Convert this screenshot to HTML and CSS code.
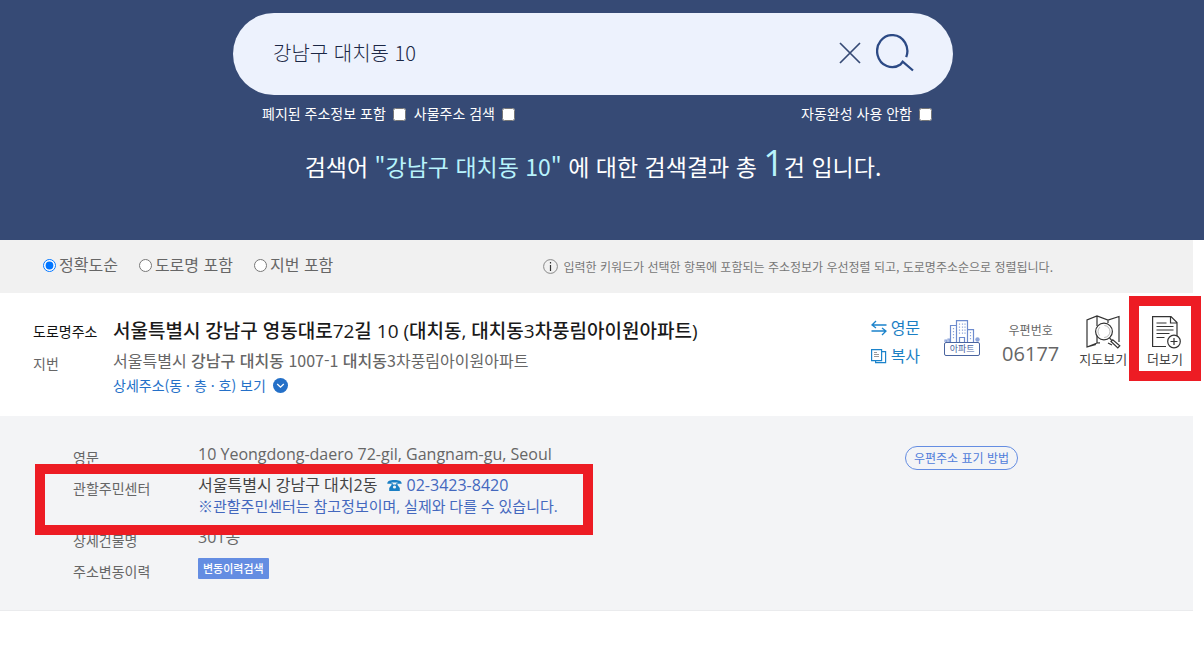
FILE: index.html
```html
<!DOCTYPE html>
<html lang="ko">
<head>
<meta charset="utf-8">
<meta name="viewport" content="width=device-width, initial-scale=1">
<title>주소 검색결과</title>
<link rel="stylesheet" href="styles.css">
</head>
<body>
<header class="hero">
  <form class="search" role="search">
    <input class="search-input" type="text" value="강남구 대치동 10" aria-label="주소 검색어">
    <button class="icon-button" type="button" aria-label="지우기">
      <svg width="22" height="22" viewBox="0 0 22 22" fill="none" stroke="#364a75" stroke-width="1.7"><path d="M1 1l20 20M21 1L1 21"/></svg>
    </button>
    <button class="icon-button" type="submit" aria-label="검색">
      <svg width="38" height="38" viewBox="0 0 38 38" fill="none" stroke="#2c4a85" stroke-width="2.3"><path d="M30.2 23.2A15.1 16 0 1 0 24.500 30.500L26.700 27.700 37 36.500"/></svg>
    </button>
  </form>
  <div class="options">
    <label class="option">폐지된 주소정보 포함 <input type="checkbox"></label>
    <label class="option">사물주소 검색 <input type="checkbox"></label>
    <label class="option option-end">자동완성 사용 안함 <input type="checkbox"></label>
  </div>
  <h1 class="summary">검색어 <span class="keyword">"강남구 대치동 10"</span> 에 대한 검색결과 총 <span class="count">1</span>건 입니다.</h1>
</header>
<main class="results">
  <div class="sort">
    <label class="radio"><input type="radio" name="sort" checked>정확도순</label>
    <label class="radio"><input type="radio" name="sort">도로명 포함</label>
    <label class="radio"><input type="radio" name="sort">지번 포함</label>
    <p class="notice">
      <svg width="15" height="15" viewBox="0 0 15 15" fill="none" stroke="#888"><circle cx="7.5" cy="7.5" r="6.9"/><path d="M7.5 6v6M7.5 3v1.6" stroke="#333" stroke-width="1.2"/></svg>
      입력한 키워드가 선택한 항목에 포함되는 주소정보가 우선정렬 되고, 도로명주소순으로 정렬됩니다.
    </p>
  </div>
  <article class="result">
    <dl class="address">
      <dt class="road-label">도로명주소</dt>
      <dd class="road">서울특별시 강남구 영동대로72길 10 (대치동, 대치동3차풍림아이원아파트)</dd>
      <dt>지번</dt>
      <dd class="lot">서울특별시 <b>강남구</b> <b>대치동</b> 1007-1 <b>대치동</b>3차풍림아이원아파트</dd>
      <dd class="more-address"><a href="#units">상세주소(동 · 층 · 호) 보기
        <svg width="15" height="15" viewBox="0 0 15 15"><circle cx="7.5" cy="7.5" r="7.5" fill="#2470c8"/><path d="M4.2 6l3.3 3.2L10.8 6" fill="none" stroke="#fff" stroke-width="1.3"/></svg></a></dd>
    </dl>
    <div class="tools">
      <div class="actions">
        <button class="action" type="button">
          <svg width="16" height="16" viewBox="0 0 16 16" fill="none" stroke="#1b83cb" stroke-width="1.3"><path d="M15.5 5H1M5 1L1 5l4 3M.5 11H15M11 8l4 3-4 4"/></svg>영문</button>
        <button class="action" type="button">
          <svg width="16" height="16" viewBox="0 0 16 16" fill="none" stroke="#1b83cb" stroke-width="1.2"><path d="M.6 1.6h10v11h-10zM10.6 3.6h4v11h-10v-2"/><path d="M3 4.5h3M3 6.5h5M3 8.5h5" stroke="#999" stroke-width="1"/></svg>복사</button>
      </div>
      <div class="kind">
        <svg width="36" height="22" viewBox="0 0 36 22" fill="none" stroke="#6d8bce" stroke-width="1.2"><path d="M6.5 22V5.500h5.500M12.500 22V.6h11V22M23.500 9.600h6V22M15.500 22v-4.500h5V22"/><path d="M9.500 8v12M15.500 3.500v12M18.500 3.500v12M21 3.500v12M26.500 12v9" stroke-dasharray="1.300 1.700" stroke="#8ca4da"/><circle cx="33.500" cy="19.500" r="2.200" fill="#8ca4da" stroke="none"/><path d="M1 22v-2h1.500v2M4 22v-3h1.500v3" stroke="#8ca4da"/></svg>
        <span class="kind-name">아파트</span>
      </div>
      <div class="postal"><span class="postal-label">우편번호</span><strong class="postal-code">06177</strong></div>
      <button class="tool" type="button">
        <svg width="35" height="34" viewBox="0 0 35 34" fill="none" stroke="#333" stroke-width="1.2"><path d="M10 29.5L1 32V5l10-4 11 4 11-3.500V27M1 32l10-4 3-.2M11 1v10M11 20v8M22 5v3M22 28l4 2"/><circle cx="18" cy="16.500" r="8.400" fill="#fff"/><circle cx="18" cy="16.500" r="6" stroke="#888" stroke-width=".6" stroke-dasharray="9 5"/><path d="M23.500 23l2 2M25 26.500l1.800-1.800 7 6-2 2.300z"/></svg>지도보기</button>
      <button class="tool highlighted" type="button">
        <svg width="32" height="34" viewBox="0 0 32 34" fill="none" stroke="#333" stroke-width="1.200"><path d="M17 31.500H3.600V1.600H22l6 6V21M21.500 1.600V8H28"/><path d="M7.500 8h10M7.500 11.500h17M7.500 15h17M7.500 18.500h13M7.500 22.500h8" stroke-width="1.200"/><circle cx="25" cy="26.500" r="6.300" fill="#fff"/><path d="M25 23v7M21.500 26.500h7"/></svg>더보기</button>
    </div>
  </article>
  <section class="details" aria-label="상세정보">
    <dl class="facts">
      <dt>영문</dt>
      <dd>10 Yeongdong-daero 72-gil, Gangnam-gu, Seoul</dd>
      <dt>관할주민센터</dt>
      <dd class="dark">서울특별시 강남구 대치2동
        <a class="phone" href="tel:02-3423-8420"><svg width="15" height="11" viewBox="0 0 15 11"><path fill="#1b7fc4" d="M.3 3.800C.3 1 3 0 7.500 0s7.200 1 7.200 3.800H10.500V2.500h-6v1.300zM4.500 3.300h1.300v1.200h3.400V3.300h1.300V5l2.300 3v3H2.200V8l2.300-3z"/><circle cx="7.500" cy="7" r="1.600" fill="#f3f4f6"/></svg>02-3423-8420</a>
        <span class="remark">※관할주민센터는 참고정보이며, 실제와 다를 수 있습니다.</span></dd>
      <dt>상세건물명</dt>
      <dd>301동</dd>
      <dt>주소변동이력</dt>
      <dd><button class="history" type="button">변동이력검색</button></dd>
    </dl>
    <button class="format" type="button">우편주소 표기 방법</button>
    <div class="frame"></div>
  </section>
</main>
</body>
</html>
```
FILE: styles.css
```css
* { box-sizing: border-box; }

body {
  margin: 0;
  background: #fff;
  color: #666;
  font: 16px/21px "Noto Sans CJK KR", sans-serif;
}

button, input { font: inherit; color: inherit; }
button { padding: 0; border: 0; background: none; cursor: pointer; white-space: nowrap; }
input[type="checkbox"], input[type="radio"] { width: 13px; height: 13px; margin: 0; }
svg { flex: none; display: block; }
a { color: inherit; text-decoration: none; }
dl, dd, p, h1 { margin: 0; }

.hero {
  padding: 13px 18px 50px 0;
  background: #364a75;
  color: #fff;
}

.search {
  display: flex;
  align-items: center;
  gap: 15px;
  max-width: 720px;
  height: 82px;
  margin: 0 auto;
  padding: 0 39px 3px 40px;
  border-radius: 41px;
  background: #edf2fd;
}
.search-input {
  flex: 1;
  min-width: 0;
  padding: 0;
  border: 0;
  outline: 0;
  background: none;
  color: #1b2745;
  font-size: 20px;
  font-weight: 300;
  line-height: 30px;
}

.options {
  display: flex;
  gap: 8px;
  max-width: 720px;
  margin: 0 auto;
  padding: 8px 21px 0 29px;
  font-size: 14px;
}
.option { display: flex; align-items: center; gap: 7px; }
.option input { margin-top: 2px; }
.option-end { margin-left: auto; }

.summary {
  margin-top: 15px;
  font-size: 23px;
  font-weight: 400;
  line-height: 48px;
  text-align: center;
}
.keyword, .count { color: #b8f3fc; }
.count { font-family: "Open Sans", sans-serif; font-size: 36px; }

.results { margin-right: 11px; }

.sort {
  display: flex;
  align-items: center;
  gap: 21px;
  min-height: 53px;
  padding: 0 140px 4px 43px;
  background: #f1f1f1;
}
.radio { display: flex; align-items: center; gap: 3px; }
.radio input { margin-top: 2px; }
.notice {
  display: flex;
  align-items: center;
  gap: 5px;
  margin-left: auto;
  padding-top: 3px;
  font-size: 12px;
  color: #777;
}

.result {
  display: flex;
  justify-content: space-between;
  align-items: flex-start;
  padding: 22px 10px 20px 33px;
}
.address {
  display: grid;
  grid-template-columns: 80px auto;
  row-gap: 5px;
  padding-top: 4px;
  font-size: 14px;
}
.address dt { padding-top: 5px; }
.address .road-label { padding-top: 2px; color: #111; }
.road {
  color: #1a1a1a;
  font-family: "Open Sans", "Noto Sans CJK KR", sans-serif;
  font-size: 19px;
  font-weight: 500;
  line-height: 24px;
}
.lot { font-size: 16px; line-height: 24px; }
.lot b { font-weight: 500; }
.more-address { grid-column: 2; margin-top: -4px; color: #2470c8; }
.more-address a { display: flex; align-items: center; gap: 7px; }

.tools { display: flex; gap: 20px; align-items: flex-start; }
.actions { display: grid; gap: 7px; padding-top: 2px; color: #1b7fc4; }
.action { display: flex; align-items: center; gap: 4px; }
.kind { padding: 5px 2px 0 4px; }
.kind-name {
  display: block;
  border: 1px solid #49649f;
  border-radius: 2px;
  color: #49649f;
  font-size: 9px;
  line-height: 12px;
  text-align: center;
}
.postal { display: grid; justify-items: center; padding-top: 4px; }
.postal-label { font-size: 12px; }
.postal-code {
  font-family: "Open Sans", sans-serif;
  font-size: 20px;
  font-weight: 400;
  line-height: 28px;
}
.tool {
  position: relative;
  display: grid;
  justify-items: center;
  color: #444;
  font-size: 13px;
  line-height: 20px;
}
.highlighted::after {
  content: "";
  position: absolute;
  inset: -19px -18px -12px;
  border: 10px solid #ed1c24;
}

.details {
  position: relative;
  display: flex;
  justify-content: space-between;
  align-items: flex-start;
  padding: 28px 175px 31px 73px;
  border-bottom: 1px solid #eaebed;
  background: #f3f4f6;
}
.facts { display: grid; grid-template-columns: 125px auto; row-gap: 10px; }
.facts dt { padding-top: 5px; font-size: 14px; line-height: 16px; }
.facts dd { font-family: "Open Sans", "Noto Sans CJK KR", sans-serif; }
.facts .dark { color: #444; }
.phone { display: inline-flex; align-items: center; gap: 5px; margin-left: 5px; color: #4468be; }
.remark { display: block; color: #4468be; font-size: 15px; }
.history {
  display: block;
  padding: 0 5px;
  border-radius: 1px;
  background: #648de2;
  color: #fff;
  font-family: "Noto Sans CJK KR", sans-serif;
  font-size: 11px;
  font-weight: 500;
  line-height: 21px;
}
.format {
  margin-top: 2px;
  padding: 0 8px;
  border: 1px solid #648de2;
  border-radius: 12px;
  color: #4f7cda;
  font-size: 12px;
  line-height: 22px;
}
.frame {
  position: absolute;
  top: 48px;
  left: 35px;
  width: 558px;
  height: 71px;
  border: 10px solid #ed1c24;
}
```
